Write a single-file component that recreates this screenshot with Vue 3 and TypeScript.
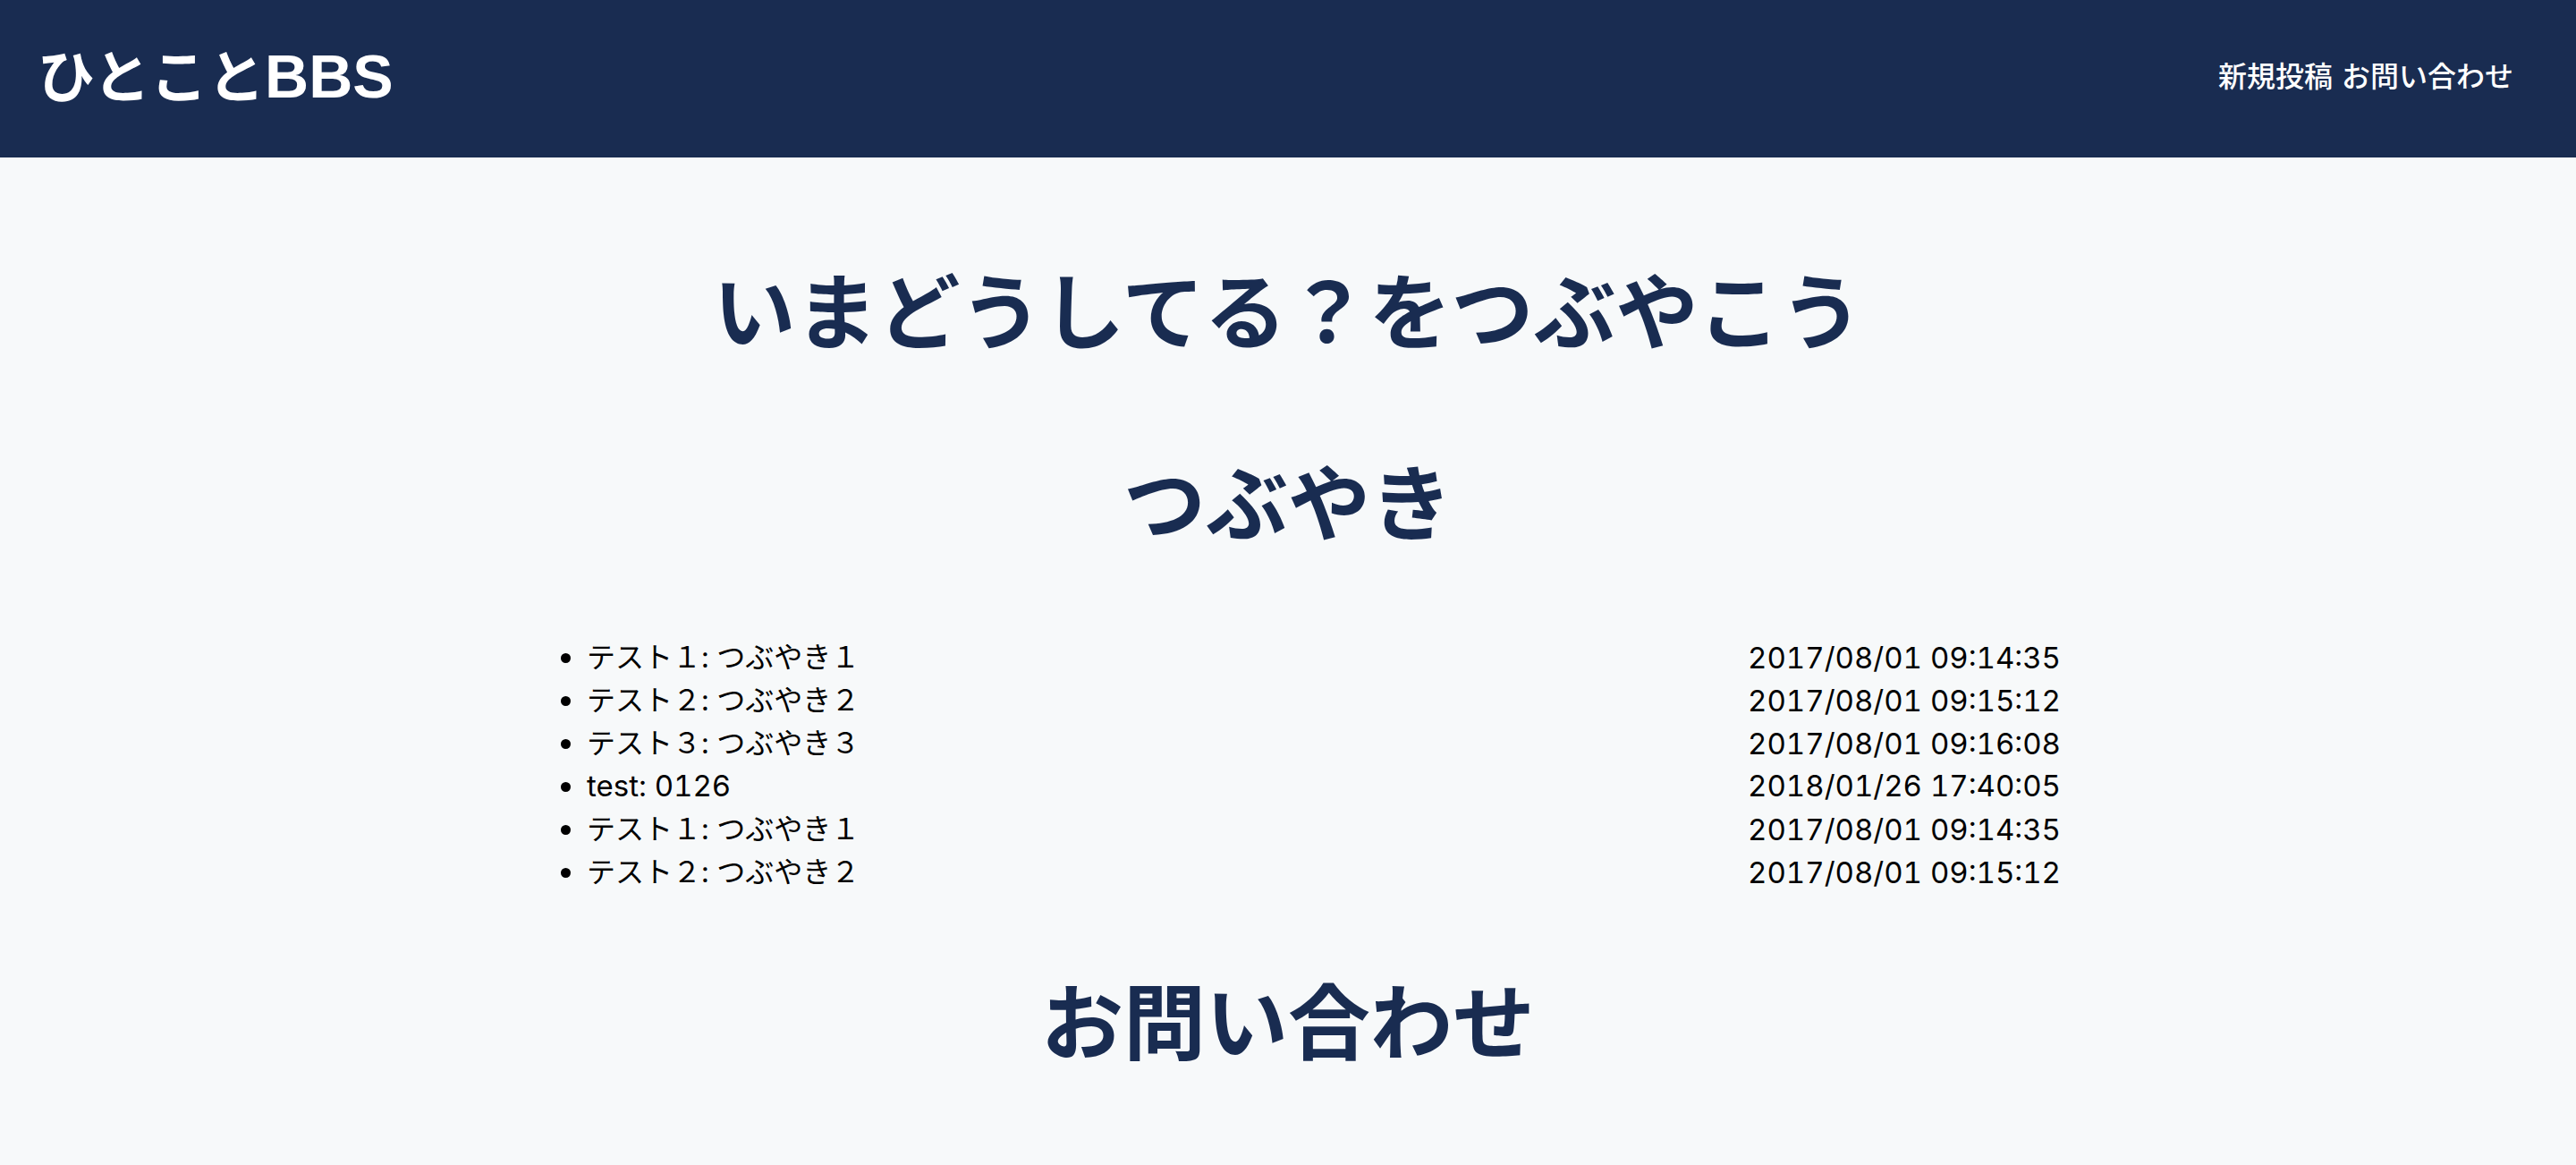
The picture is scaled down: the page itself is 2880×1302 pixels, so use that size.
<script setup lang="ts">
interface Tweet {
  name: string
  body: string
  date: string
}

const tweets: Tweet[] = [
  { name: 'テスト１', body: 'つぶやき１', date: '2017/08/01 09:14:35' },
  { name: 'テスト２', body: 'つぶやき２', date: '2017/08/01 09:15:12' },
  { name: 'テスト３', body: 'つぶやき３', date: '2017/08/01 09:16:08' },
  { name: 'test', body: '0126', date: '2018/01/26 17:40:05' },
  { name: 'テスト１', body: 'つぶやき１', date: '2017/08/01 09:14:35' },
  { name: 'テスト２', body: 'つぶやき２', date: '2017/08/01 09:15:12' },
]

// Latin letters look small next to kana, so all-Latin posts are set larger.
const isLatin = (tweet: Tweet): boolean => /^[\w\s]+$/.test(tweet.name + tweet.body)
</script>

<template>
  <header class="header">
    <h1 class="logo">ひとこと<span class="logo-latin">BBS</span></h1>
    <nav class="nav">
      <a href="#post">新規投稿</a>
      <a href="#contact">お問い合わせ</a>
    </nav>
  </header>
  <main class="main">
    <h2 id="post" class="heading">いまどうしてる？をつぶやこう</h2>
    <h2 class="heading">つぶやき</h2>
    <ul class="tweets">
      <li v-for="(tweet, i) in tweets" :key="i" class="tweet">
        <div class="row">
          <span :class="{ latin: isLatin(tweet) }">{{ tweet.name }}: {{ tweet.body }}</span>
          <time class="latin">{{ tweet.date }}</time>
        </div>
      </li>
    </ul>
    <h2 id="contact" class="heading">お問い合わせ</h2>
  </main>
</template>

<style>
body {
  margin: 0;
  background: #f7f9fa;
}
</style>

<style scoped>
.header {
  display: flex;
  align-items: center;
  justify-content: space-between;
  box-sizing: border-box;
  min-height: 176px;
  padding: 0 70px 4px 42px;
  background: #192c51;
  color: #fff;
  font-family: "Liberation Sans", "Noto Sans CJK JP", sans-serif;
}

.logo {
  margin: 0;
  font-size: 64px;
  line-height: 96px;
}

.logo-latin {
  font-size: 68px;
}

.nav {
  display: flex;
  gap: 10px;
  font-size: 32px;
  font-weight: 500;
  line-height: 48px;
}

.nav a {
  color: inherit;
  text-decoration: none;
}

.main {
  display: flex;
  flex-direction: column;
  align-items: center;
  gap: 78px;
  padding: 106px 0 78px;
}

.heading {
  margin: 0;
  padding-bottom: 14px;
  color: #192c51;
  font-family: "Noto Sans CJK JP", sans-serif;
  font-size: 92px;
  line-height: 122px;
  text-align: center;
}

.tweets {
  box-sizing: border-box;
  width: 60%;
  margin: 0;
  padding: 0 0 0 80px;
  color: #000;
  font-family: "Noto Sans", "Noto Sans CJK JP", sans-serif;
  font-size: 32px;
  line-height: 48px;
}

.tweet {
  height: 48px;
}

.row {
  display: flex;
  justify-content: space-between;
  font-family: Inter, "Noto Sans CJK JP", sans-serif;
  font-variant-numeric: tabular-nums;
}

.latin {
  font-size: 33px;
}
</style>
